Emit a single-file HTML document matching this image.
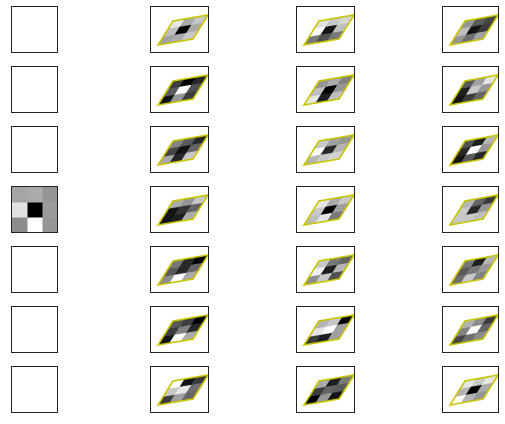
<!DOCTYPE html>
<html><head><meta charset="utf-8"><style>
html,body{margin:0;padding:0;background:#fff;width:505px;height:424px;overflow:hidden}
</style></head><body>
<svg id="s" width="505" height="424" xmlns="http://www.w3.org/2000/svg" shape-rendering="crispEdges"></svg>
<script>
var s=document.getElementById('s');var h='';
var colsX=[11,150,296,442],colsW=[46,58,58,56];
var data=[
[[230,170,200,190,0,170,160,170,200],[225,200,215,255,20,190,120,80,120],[150,90,70,190,20,60,150,110,160]],
[[60,0,40,90,255,80,20,150,60],[150,170,130,190,0,150,230,30,190],[90,160,230,30,200,150,20,60,100]],
[[130,90,40,70,20,100,170,40,200],[200,160,150,250,40,180,180,200,210],[80,30,180,40,255,150,20,90,40]],
[[170,150,200,20,50,100,20,30,170],[230,170,200,200,0,160,190,230,120],[180,100,60,200,40,150,200,200,190]],
[[120,40,0,90,40,100,140,255,170],[200,120,100,240,30,180,140,200,80],[120,30,180,90,120,150,110,200,130]],
[[90,60,0,60,130,40,20,255,170],[180,200,0,230,255,160,60,30,160],[180,140,60,130,255,100,70,110,140]],
[[255,20,60,200,230,110,60,160,100],[170,30,120,60,100,90,0,150,20],[230,200,230,180,0,170,255,180,150]]
];
for(var r=0;r<7;r++){var y=6+r*60;
 h+='<rect x="'+(colsX[0]+.5)+'" y="'+(y+.5)+'" width="46" height="46" fill="#fff" stroke="#222" stroke-width="1"/>';
 if(r==3){var m=[165,170,150,225,0,155,140,255,150];for(var k=0;k<9;k++){var g=m[k];h+='<rect x="'+(12+(k%3)*15.3)+'" y="'+(y+1+Math.floor(k/3)*15.3)+'" width="15.5" height="15.5" fill="rgb('+g+','+g+','+g+')"/>';}
 h+='<rect x="11.5" y="'+(y+.5)+'" width="46" height="46" fill="none" stroke="#222"/>';}
 for(var c=1;c<4;c++){var x=colsX[c],w=colsW[c];var d=data[r][c-1];
  var bx=x+8,by=y+39,ux=35,uy=-6,vx=15,vy=-24;if(c==3){ux=33}
  function P(i,j){return (bx+ux*j/3+vx*i/3).toFixed(2)+','+(by+uy*j/3+vy*i/3).toFixed(2);}
  var poly='';
  for(var k=0;k<9;k++){var row=Math.floor(k/3),col=k%3,i=2-row,g=d[k];
   h+='<polygon shape-rendering="auto" points="'+P(i,col)+' '+P(i,col+1)+' '+P(i+1,col+1)+' '+P(i+1,col)+'" fill="rgb('+g+','+g+','+g+')" stroke="rgb('+g+','+g+','+g+')" stroke-width=".4"/>';}
  h+='<polygon shape-rendering="auto" points="'+P(0,0)+' '+P(0,3)+' '+P(3,3)+' '+P(3,0)+'" fill="none" stroke="#c8c400" stroke-width="1.6"/>';
  h+='<rect x="'+(x+.5)+'" y="'+(y+.5)+'" width="'+w+'" height="46" fill="none" stroke="#222"/>';
 }
}
s.innerHTML=h;
</script>
</body></html>
